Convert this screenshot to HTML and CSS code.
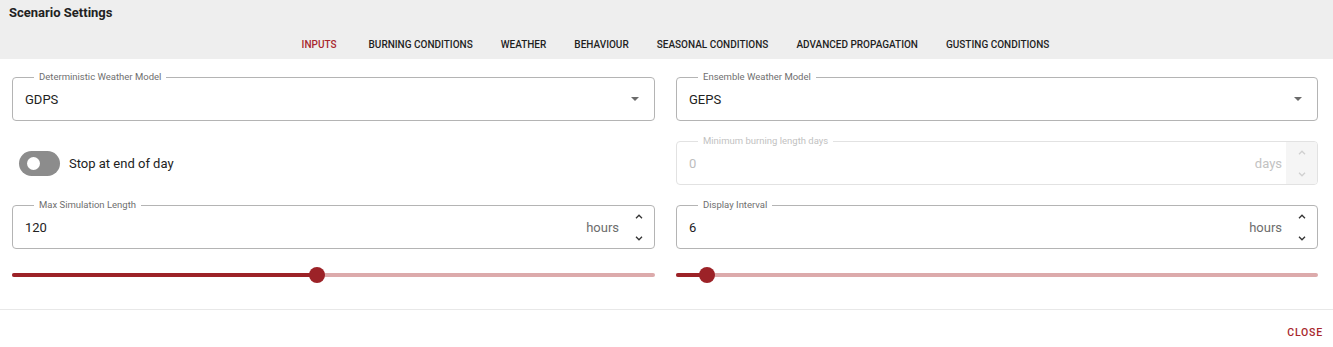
FILE: index.html
```html
<!DOCTYPE html>
<html>
<head>
<meta charset="utf-8">
<link rel="stylesheet" href="styles.css">
</head>
<body>
<div class="dialog">
  <header class="header">
    <div class="title">Scenario Settings</div>
    <nav class="tabs">
      <span class="tab active">Inputs</span>
      <span class="tab">Burning Conditions</span>
      <span class="tab">Weather</span>
      <span class="tab">Behaviour</span>
      <span class="tab">Seasonal Conditions</span>
      <span class="tab">Advanced Propagation</span>
      <span class="tab">Gusting Conditions</span>
    </nav>
  </header>

  <main class="content">
    <div class="field select">
      <span class="label">Deterministic Weather Model</span>
      <span class="value">GDPS</span>
      <svg class="caret" width="8" height="4" viewBox="0 0 8 4"><path d="M0 0h8L4 4z" fill="#6b6b6b"/></svg>
    </div>
    <div class="field select">
      <span class="label">Ensemble Weather Model</span>
      <span class="value">GEPS</span>
      <svg class="caret" width="8" height="4" viewBox="0 0 8 4"><path d="M0 0h8L4 4z" fill="#6b6b6b"/></svg>
    </div>

    <div class="toggle-row">
      <span class="switch"><span class="knob"></span></span>
      <span class="toggle-text">Stop at end of day</span>
    </div>
    <div class="field number disabled">
      <span class="label">Minimum burning length days</span>
      <span class="value">0</span>
      <span class="unit">days</span>
      <span class="spin">
        <svg width="8" height="5" viewBox="0 0 8 5"><path d="M1 4.2L4 1.2L7 4.2" fill="none" stroke="currentColor" stroke-width="1.3"/></svg>
        <svg width="8" height="5" viewBox="0 0 8 5"><path d="M1 0.8L4 3.8L7 0.8" fill="none" stroke="currentColor" stroke-width="1.3"/></svg>
      </span>
    </div>

    <div class="field number">
      <span class="label">Max Simulation Length</span>
      <span class="value">120</span>
      <span class="unit">hours</span>
      <span class="spin">
        <svg width="8" height="5" viewBox="0 0 8 5"><path d="M1 4.2L4 1.2L7 4.2" fill="none" stroke="currentColor" stroke-width="1.3"/></svg>
        <svg width="8" height="5" viewBox="0 0 8 5"><path d="M1 0.8L4 3.8L7 0.8" fill="none" stroke="currentColor" stroke-width="1.3"/></svg>
      </span>
    </div>
    <div class="field number">
      <span class="label">Display Interval</span>
      <span class="value">6</span>
      <span class="unit">hours</span>
      <span class="spin">
        <svg width="8" height="5" viewBox="0 0 8 5"><path d="M1 4.2L4 1.2L7 4.2" fill="none" stroke="currentColor" stroke-width="1.3"/></svg>
        <svg width="8" height="5" viewBox="0 0 8 5"><path d="M1 0.8L4 3.8L7 0.8" fill="none" stroke="currentColor" stroke-width="1.3"/></svg>
      </span>
    </div>

    <div class="slider">
      <span class="fill" style="width: 47.4%"></span>
      <span class="thumb" style="left: 47.4%"></span>
    </div>
    <div class="slider">
      <span class="fill" style="width: 4.8%"></span>
      <span class="thumb" style="left: 4.8%"></span>
    </div>
  </main>

  <footer class="footer">
    <span class="close">Close</span>
  </footer>
</div>
</body>
</html>
```

FILE: styles.css
```css
* { box-sizing: border-box; }

html, body {
  margin: 0;
  padding: 0;
  background: #ffffff;
  font-family: Roboto, "Liberation Sans", Arial, sans-serif;
  color: #212121;
}

.dialog {
  width: 1333px;
  height: 347px;
  overflow: hidden;
}

.header {
  background: #eeeeee;
  height: 59px;
  padding: 5px 9px 0 9px;
}

.title {
  font-size: 13px;
  font-weight: 700;
  line-height: 15px;
  color: #222222;
}

.tabs {
  display: flex;
  justify-content: center;
  align-items: center;
  height: 26px;
  margin-top: 12px;
  padding-left: 16px;
}

.tab {
  text-transform: uppercase;
  font-size: 10px;
  font-weight: 500;
  line-height: 12px;
  padding: 0 14px;
  color: #1f1f1f;
  white-space: nowrap;
}

.tab.active {
  color: #a8272d;
  padding-right: 18px;
  padding-left: 16px;
}

.content {
  display: grid;
  grid-template-columns: 643px 642px;
  grid-template-rows: 44px 44px 44px 10px;
  column-gap: 21px;
  row-gap: 20px;
  padding: 18px 16px 0 12px;
}

.field {
  position: relative;
  display: flex;
  align-items: center;
  height: 44px;
  border: 1px solid #b4b4b4;
  border-radius: 4px;
  padding-left: 12px;
}

.label {
  position: absolute;
  top: -7px;
  left: 21px;
  padding: 0 5px;
  background: #ffffff;
  font-size: 9.5px;
  line-height: 12px;
  color: #6f6f6f;
  white-space: nowrap;
}

.value {
  font-size: 13px;
  color: #222222;
  flex: 1;
}

.select {
  padding-right: 15px;
}

.caret {
  display: block;
}

.number .unit {
  font-size: 13px;
  color: #6d6d6d;
  margin-right: 4px;
}

.spin {
  width: 31px;
  align-self: stretch;
  display: flex;
  flex-direction: column;
  justify-content: space-between;
  align-items: center;
  padding: 8px 0 7px;
  color: #333333;
  border-radius: 0 3px 3px 0;
}

.spin svg { display: block; }

.disabled {
  border-color: #e2e2e2;
}

.disabled .label { color: #c2c2c2; }
.disabled .value { color: #bdbdbd; }
.disabled .unit { color: #c2c2c2; }
.disabled .spin {
  background: #f5f5f5;
  color: #d0d0d0;
}

.toggle-row {
  display: flex;
  align-items: center;
  padding-left: 7px;
}

.switch {
  position: relative;
  width: 41px;
  height: 25px;
  border-radius: 13px;
  background: #8c8c8c;
}

.knob {
  position: absolute;
  top: 6px;
  left: 8px;
  width: 13px;
  height: 13px;
  border-radius: 50%;
  background: #ffffff;
}

.toggle-text {
  margin-left: 9px;
  font-size: 13px;
  color: #222222;
}

.slider {
  position: relative;
  height: 10px;
  margin-top: 1px;
}

.slider::before {
  content: "";
  position: absolute;
  left: 0;
  right: 0;
  top: 3px;
  height: 4px;
  border-radius: 2px;
  background: #dcaaab;
}

.fill {
  position: absolute;
  left: 0;
  top: 3px;
  height: 4px;
  border-radius: 2px;
  background: #9c2227;
}

.thumb {
  position: absolute;
  top: -3px;
  width: 16px;
  height: 16px;
  margin-left: -8px;
  border-radius: 50%;
  background: #9c2227;
}

.footer {
  margin-top: 30px;
  border-top: 1px solid #e8e8e8;
  display: flex;
  justify-content: flex-end;
  padding: 17px 10px 0 0;
}

.close {
  text-transform: uppercase;
  font-size: 10.5px;
  font-weight: 500;
  letter-spacing: 0.8px;
  line-height: 12px;
  color: #a8272d;
}
```
